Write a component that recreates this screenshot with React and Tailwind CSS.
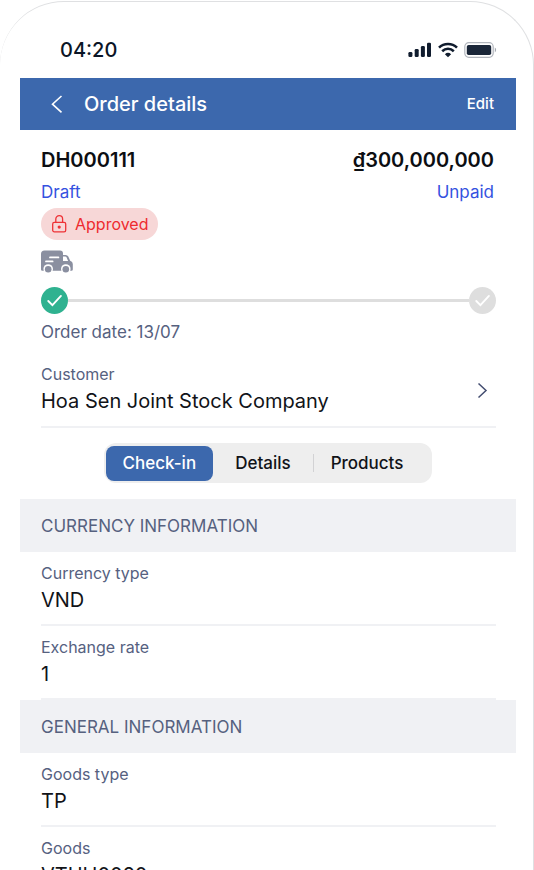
import React, { useState } from 'react';

const tabs = [
  { name: 'Check-in', padding: 'px-[17px]' },
  { name: 'Details', padding: 'px-[22px]' },
  { name: 'Products', padding: 'px-[17px]' },
];

const sections = [
  {
    title: 'CURRENCY INFORMATION',
    fields: [
      { label: 'Currency type', value: 'VND' },
      { label: 'Exchange rate', value: '1' },
    ],
  },
  {
    title: 'GENERAL INFORMATION',
    fields: [
      { label: 'Goods type', value: 'TP' },
      { label: 'Goods', value: 'VTHH0020' },
    ],
  },
];

const StatusBar = () => (
  <div className="flex items-center justify-between pt-8 pb-3 pl-10 pr-[19px]">
    <span className="text-xl leading-8 font-medium text-[#0b1526]">04:20</span>
    <div className="flex items-center gap-1.5">
      <svg width="24" height="16" viewBox="0 0 24 16" fill="#101c2e" aria-hidden="true">
        <rect x="0.4" y="9.9" width="4" height="5.1" rx="1.3" />
        <rect x="6.7" y="7" width="4" height="8" rx="1.3" />
        <rect x="12.9" y="4" width="4" height="11" rx="1.3" />
        <rect x="19" y="0.8" width="4" height="14.2" rx="1.3" />
      </svg>
      <svg width="20" height="16" viewBox="0 0 20 16" fill="none" stroke="#101c2e" strokeWidth="2.6" aria-hidden="true">
        <path d="M1 5.6C6 .7 14 .7 19 5.6" />
        <path d="M4.2 9.2c3.4-3.2 8.2-3.2 11.6 0" />
        <path d="M6.9 12.2a4.6 4.6 0 0 1 6.2 0L10 15.2z" fill="#101c2e" stroke="none" />
      </svg>
      <svg width="33" height="16" viewBox="0 0 33 16" aria-hidden="true">
        <rect x="0.8" y="0.7" width="28.4" height="14.6" rx="4" fill="none" stroke="#b2b6bd" strokeWidth="1.2" />
        <rect x="2.8" y="2.9" width="24.4" height="10.2" rx="1.8" fill="#1a2638" />
        <path d="M30.8 5.6c1.8.8 1.8 4 0 4.8z" fill="#a3a8b0" />
      </svg>
    </div>
  </div>
);

const TruckIcon = () => (
  <svg width="32" height="24" viewBox="0 0 32 24" aria-hidden="true">
    <path
      d="M3.5.5H19A3 3 0 0 1 22 3.5V5h2.6a3 3 0 0 1 2.7 1.6l1.9 4.1a3.4 3.4 0 0 1 2.6 3.3v5.4a1.4 1.4 0 0 1-1.4 1.4H1.4A1.4 1.4 0 0 1 0 19.4V4A3.5 3.5 0 0 1 3.5.5z"
      fill="#8a8fa0"
    />
    <path d="M22 6.4h2.3a1.2 1.2 0 0 1 1.1.7l1.7 3.8H22z" fill="#fff" />
    <path d="M9 7.4h8.4M5 11.4h6.6" stroke="#fff" strokeWidth="1.8" strokeLinecap="round" />
    <circle cx="7.2" cy="19" r="4.8" fill="#fff" />
    <circle cx="24.8" cy="19" r="4.8" fill="#fff" />
    <circle cx="7.2" cy="19.3" r="3.3" fill="#8a8fa0" />
    <circle cx="24.8" cy="19.3" r="3.3" fill="#8a8fa0" />
  </svg>
);

const LockIcon = () => (
  <svg width="16" height="20" viewBox="0 0 16 20" fill="none" stroke="#ee3236" strokeWidth="1.3" aria-hidden="true">
    <rect x="1.7" y="8.4" width="13" height="9.4" rx="1.6" />
    <path d="M4.8 8.2V5a3.4 3.4 0 0 1 6.8 0v3.2" />
    <circle cx="8.2" cy="13.1" r="1.6" fill="#ee3236" stroke="none" />
  </svg>
);

const StepCircle = ({ done }) => (
  <svg width="27" height="27" viewBox="0 0 26 26" className="shrink-0" aria-hidden="true">
    <circle cx="13" cy="13" r="13" fill={done ? '#2fb290' : '#dedede'} />
    <path d="M7 13.5l4 4L19.2 8.6" fill="none" stroke="#fff" strokeWidth="1.8" strokeLinecap="round" />
  </svg>
);

const Field = ({ label, value }) => (
  <div className="border-b-2 border-[#f0f1f4] pt-2.5 pb-2">
    <dt className="text-base leading-[22px] text-[#56617f]">{label}</dt>
    <dd className="text-xl leading-8 text-[#111318]">{value}</dd>
  </div>
);

const App = () => {
  const [activeTab, setActiveTab] = useState('Check-in');

  return (
    <div className="h-screen overflow-hidden bg-white pt-px font-['Inter',sans-serif]">
      <div className="min-h-[120vh] rounded-t-[64px] border-t border-r border-[#dfe0e2] bg-white pr-[17px] pl-5">
        <StatusBar />

        <header className="flex h-[52px] items-center bg-[#3c68ad] px-[22px] text-white">
          <button type="button" aria-label="Back" className="mr-2.5 flex w-8 items-center pl-2">
            <svg width="13" height="20" viewBox="0 0 13 20" fill="none" stroke="#fff" strokeWidth="1.6" aria-hidden="true">
              <path d="M11.5 2L2.5 10.2l9 8.2" />
            </svg>
          </button>
          <h1 className="flex-1 text-xl font-medium">Order details</h1>
          <button type="button" className="text-[15px] font-medium">Edit</button>
        </header>

        <main>
          <div className="pt-4 pr-5 pl-[21px]">
            <div className="flex justify-between pr-0.5 text-xl leading-7 font-semibold text-[#0c0e12]">
              <span>DH000111</span>
              <span>₫300,000,000</span>
            </div>
            <div className="flex justify-between pt-1 pr-0.5 text-[17px] leading-7 text-[#3452e0]">
              <span>Draft</span>
              <span>Unpaid</span>
            </div>
            <div className="mt-0.5 flex h-8 w-fit items-center gap-2 rounded-full bg-[#f7d7d7] px-2.5 text-base text-[#ee2b2f]">
              <LockIcon />
              Approved
            </div>
            <div className="pt-2.5">
              <TruckIcon />
            </div>
            <div className="flex items-center pt-[13px]">
              <StepCircle done />
              <div className="h-[3px] flex-1 bg-[#dedede]" />
              <StepCircle />
            </div>
            <p className="pt-1 text-[17px] leading-7 text-[#56617f]">Order date: 13/07</p>

            <a href="#customer" className="mt-[17px] flex items-center justify-between border-b-2 border-[#f0f1f4] pb-[9px]">
              <span className="block">
                <span className="block text-base leading-[22px] text-[#56617f]">Customer</span>
                <span className="block text-xl leading-8 text-[#111318]">Hoa Sen Joint Stock Company</span>
              </span>
              <svg width="11" height="17" viewBox="0 0 11 17" className="mr-2" fill="none" stroke="#434d70" strokeWidth="1.5" aria-hidden="true">
                <path d="M1.5 1.5l7.5 7-7.5 7" />
              </svg>
            </a>
          </div>

          <div className="flex justify-center pt-[15px] pb-4">
            <div role="tablist" className="flex h-10 items-center rounded-xl bg-[#eeeeee] py-0.5 pr-3 pl-0.5">
              {tabs.map((tab, i) => (
                <React.Fragment key={tab.name}>
                  {i === 2 && <div className="h-[18px] w-px bg-[#d2d2d4]" />}
                  <button
                    type="button"
                    role="tab"
                    aria-selected={activeTab === tab.name}
                    onClick={() => setActiveTab(tab.name)}
                    className={`h-[35px] rounded-lg pt-0.5 text-[17px] font-medium ${tab.padding} ${
                      activeTab === tab.name ? 'bg-[#3c68ad] text-white' : 'text-[#111318]'
                    }`}
                  >
                    {tab.name}
                  </button>
                </React.Fragment>
              ))}
            </div>
          </div>

          {sections.map((section) => (
            <section key={section.title}>
              <h2 className="bg-[#f0f1f4] px-[21px] pt-0.5 text-[17px] leading-[51px] text-[#56617f]">{section.title}</h2>
              <dl className="pr-5 pl-[21px]">
                {section.fields.map((field) => (
                  <Field key={field.label} label={field.label} value={field.value} />
                ))}
              </dl>
            </section>
          ))}
        </main>
      </div>
    </div>
  );
};

export default App;
